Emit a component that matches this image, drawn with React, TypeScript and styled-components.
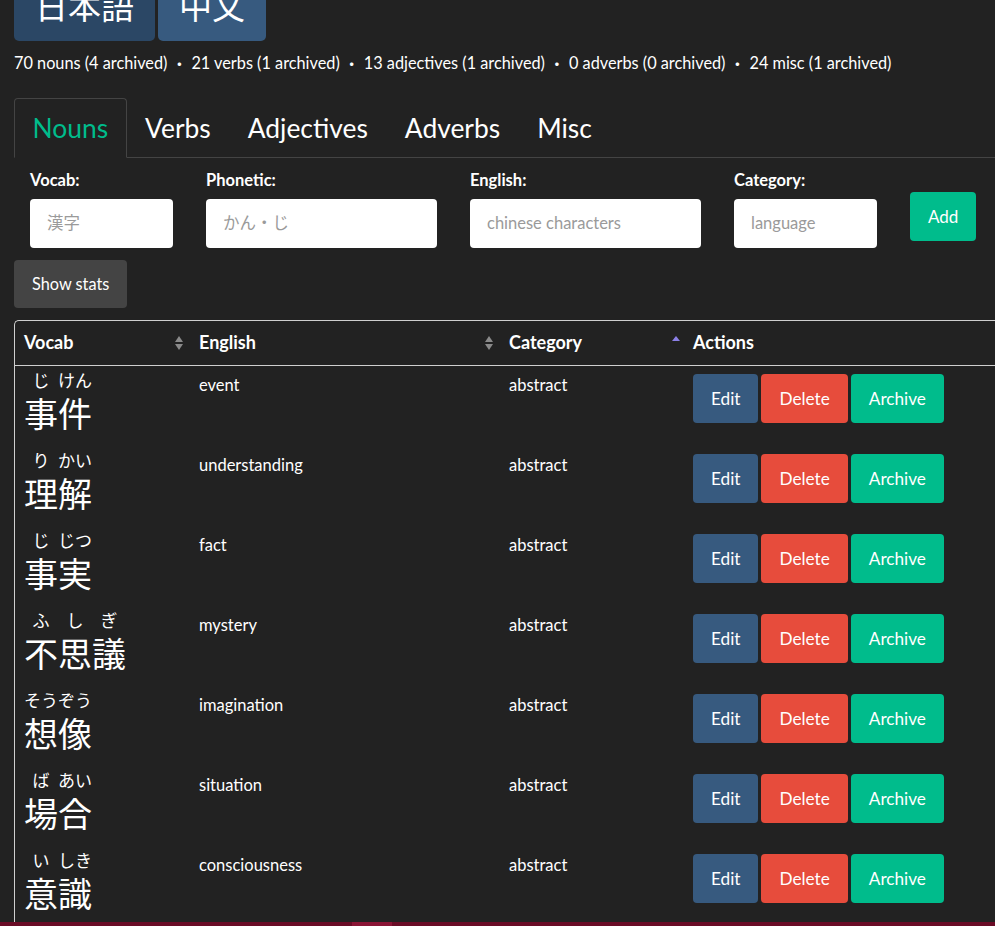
import React from "react";
import styled, { createGlobalStyle } from "styled-components";

const GlobalStyle = createGlobalStyle`
  html, body {
    margin: 0;
    padding: 0;
    overflow: hidden;
    background: #222222;
  }
  body {
    font-family: Lato, "Noto Sans CJK JP", sans-serif;
    color: #ffffff;
    font-size: 16px;
    line-height: 1.5;
  }
  * { box-sizing: border-box; }
`;

const cjk = `"Noto Sans CJK JP", "Noto Sans CJK SC", sans-serif`;

type Word = { kana: [string, string][]; english: string; category: string };

const words: Word[] = [
  { kana: [["事", "じ"], ["件", "けん"]], english: "event", category: "abstract" },
  { kana: [["理", "り"], ["解", "かい"]], english: "understanding", category: "abstract" },
  { kana: [["事", "じ"], ["実", "じつ"]], english: "fact", category: "abstract" },
  { kana: [["不", "ふ"], ["思", "し"], ["議", "ぎ"]], english: "mystery", category: "abstract" },
  { kana: [["想", "そう"], ["像", "ぞう"]], english: "imagination", category: "abstract" },
  { kana: [["場", "ば"], ["合", "あい"]], english: "situation", category: "abstract" },
  { kana: [["意", "い"], ["識", "しき"]], english: "consciousness", category: "abstract" },
];

const counts = [
  "70 nouns (4 archived)",
  "21 verbs (1 archived)",
  "13 adjectives (1 archived)",
  "0 adverbs (0 archived)",
  "24 misc (1 archived)",
];

const App: React.FC = () => {
  return (
    <Page>
      <GlobalStyle />
      <LangRow>
        <LangButton $active>日本語</LangButton>
        <LangButton>中文</LangButton>
      </LangRow>
      <Stats>
        {counts.map((c, i) => (
          <React.Fragment key={i}>
            {i > 0 && <Dot>・</Dot>}
            {c}
          </React.Fragment>
        ))}
      </Stats>
      <Tabs>
        <Tab $active>Nouns</Tab>
        <Tab>Verbs</Tab>
        <Tab>Adjectives</Tab>
        <Tab>Adverbs</Tab>
        <Tab>Misc</Tab>
      </Tabs>
      <Form>
        <Field $w={143}>
          <Label>Vocab:</Label>
          <Input placeholder="漢字" />
        </Field>
        <Field $w={231}>
          <Label>Phonetic:</Label>
          <Input placeholder="かん・じ" />
        </Field>
        <Field $w={231}>
          <Label>English:</Label>
          <Input placeholder="chinese characters" />
        </Field>
        <Field $w={143}>
          <Label>Category:</Label>
          <Input placeholder="language" />
        </Field>
        <AddButton>Add</AddButton>
      </Form>
      <StatsButton>Show stats</StatsButton>
      <Table>
        <colgroup>
          <col style={{ width: 175 }} />
          <col style={{ width: 310 }} />
          <col style={{ width: 184 }} />
          <col />
        </colgroup>
        <thead>
          <tr>
            <Th>Vocab<SortBoth /></Th>
            <Th>English<SortBoth /></Th>
            <Th>Category<SortUp /></Th>
            <Th>Actions</Th>
          </tr>
        </thead>
        <tbody>
          {words.map((w, i) => (
            <tr key={i}>
              <Td>
                <Vocab>
                  {w.kana.map(([k, r], j) => (
                    <Char key={j}>
                      <Reading>{r}</Reading>
                      <Kanji>{k}</Kanji>
                    </Char>
                  ))}
                </Vocab>
              </Td>
              <Td>{w.english}</Td>
              <Td>{w.category}</Td>
              <Td>
                <Actions>
                  <ActionButton $tone="edit">Edit</ActionButton>
                  <ActionButton $tone="delete">Delete</ActionButton>
                  <ActionButton $tone="archive">Archive</ActionButton>
                </Actions>
              </Td>
            </tr>
          ))}
        </tbody>
      </Table>
      <BottomBar />
    </Page>
  );
};

const Page = styled.div`
  padding: 0 0 0 14px;
  width: 1040px;
`;

const LangRow = styled.div`
  display: flex;
  gap: 3px;
  margin-top: -29px;
`;

const LangButton = styled.button<{ $active?: boolean }>`
  font-family: ${cjk};
  font-size: 33px;
  line-height: 1.5;
  padding: 10px 21px;
  color: #ffffff;
  border: none;
  border-radius: 5px;
  background: ${(p) => (p.$active ? "#2b4765" : "#375a7f")};
`;

const Stats = styled.div`
  margin-top: 10px;
  font-size: 16.3px;
  line-height: 24px;
  height: 24px;
  white-space: nowrap;
`;

const Dot = styled.span`
  display: inline-block;
  vertical-align: top;
  width: 24px;
  line-height: 24px;
  text-align: center;
  font-family: ${cjk};
`;

const Tabs = styled.div`
  margin-top: 23px;
  display: flex;
  border-bottom: 1px solid #444444;
`;

const Tab = styled.div<{ $active?: boolean }>`
  font-size: 26.4px;
  line-height: 38px;
  padding: 10px 17.5px;
  margin-bottom: -1px;
  border: 1px solid ${(p) => (p.$active ? "#444444" : "transparent")};
  border-bottom-color: ${(p) => (p.$active ? "#222222" : "transparent")};
  border-radius: 4px 4px 0 0;
  color: ${(p) => (p.$active ? "#00bc8c" : "#ffffff")};
`;

const Form = styled.div`
  display: flex;
  gap: 33px;
  padding: 10px 16px 0;
`;

const Field = styled.div<{ $w: number }>`
  width: ${(p) => p.$w}px;
  display: flex;
  flex-direction: column;
`;

const Label = styled.label`
  font-weight: 700;
  font-size: 16.5px;
  line-height: 24px;
  margin-bottom: 7px;
`;

const Input = styled.input`
  height: 49px;
  width: 100%;
  border: none;
  border-radius: 4px;
  background: #ffffff;
  padding: 0 17px;
  font-family: Lato, "Noto Sans CJK JP", sans-serif;
  font-size: 16.5px;
  color: #222;
  outline: none;
  &::placeholder {
    color: #9a9a9a;
  }
`;

const AddButton = styled.button`
  align-self: flex-start;
  margin-top: 24px;
  height: 49px;
  padding: 0 18px;
  border: none;
  border-radius: 4px;
  background: #00bc8c;
  color: #ffffff;
  font-family: Lato, sans-serif;
  font-size: 17px;
`;

const StatsButton = styled.button`
  display: block;
  margin-top: 12px;
  height: 48px;
  padding: 0 18px;
  border: none;
  border-radius: 4px;
  background: #444444;
  color: #ffffff;
  font-family: Lato, sans-serif;
  font-size: 16.3px;
`;

const Table = styled.table`
  margin-top: 12px;
  width: 1010px;
  table-layout: fixed;
  border-collapse: separate;
  border-spacing: 0;
  border: 1px solid #cfcfcf;
  border-right: none;
  border-bottom: none;
  border-radius: 5px 0 0 0;
`;

const Th = styled.th`
  position: relative;
  text-align: left;
  font-size: 18px;
  font-weight: 700;
  line-height: 24px;
  padding: 9px 9px 11px;
  border-bottom: 1px solid #cfcfcf;
`;

const SortBoth = styled.span`
  position: absolute;
  right: 11px;
  top: 15px;
  width: 0;
  height: 0;
  &::before,
  &::after {
    content: "";
    position: absolute;
    left: -4px;
    border-left: 4px solid transparent;
    border-right: 4px solid transparent;
  }
  &::before {
    top: 0;
    border-bottom: 6px solid #8a8a8a;
  }
  &::after {
    top: 8px;
    border-top: 6px solid #8a8a8a;
  }
`;

const SortUp = styled.span`
  position: absolute;
  right: 4px;
  top: 15px;
  width: 0;
  height: 0;
  border-left: 4px solid transparent;
  border-right: 4px solid transparent;
  border-bottom: 5px solid #8c80e6;
`;

const Td = styled.td`
  height: 80px;
  vertical-align: top;
  padding: 7px 9px 0;
  font-size: 16.5px;
  line-height: 24px;
`;

const Vocab = styled.div`
  display: flex;
  margin-top: -5px;
  font-family: ${cjk};
`;

const Char = styled.span`
  display: inline-flex;
  flex-direction: column;
  align-items: center;
`;

const Reading = styled.span`
  font-size: 17px;
  line-height: 24px;
  white-space: nowrap;
`;

const Kanji = styled.span`
  font-size: 34px;
  line-height: 40px;
  margin-top: 1px;
`;

const Actions = styled.div`
  display: flex;
  gap: 3px;
  padding-top: 1px;
`;

const tones = {
  edit: "#375a7f",
  delete: "#e74c3c",
  archive: "#00bc8c",
};

const ActionButton = styled.button<{ $tone: keyof typeof tones }>`
  height: 49px;
  padding: 0 18px;
  border: none;
  border-radius: 4px;
  background: ${(p) => tones[p.$tone]};
  color: #ffffff;
  font-family: Lato, sans-serif;
  font-size: 17.2px;
`;

const BottomBar = styled.div`
  position: fixed;
  left: 0;
  right: 0;
  bottom: 0;
  height: 4px;
  background: linear-gradient(
    to right,
    #6a0c26 0,
    #6a0c26 352px,
    #8a1535 352px,
    #8a1535 392px,
    #6a0c26 392px
  );
`;

export default App;
